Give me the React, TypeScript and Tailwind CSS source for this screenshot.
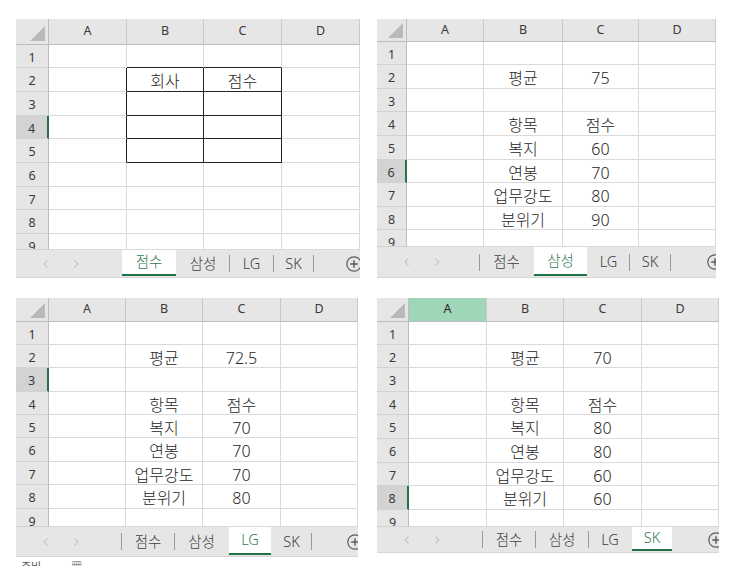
import React, { Fragment } from "react";

const TAB_NAMES = ["점수", "삼성", "LG", "SK"];
const COLS = ["A", "B", "C", "D"];

type SheetProps = {
  width: string;
  cols: string[];
  headerH: string;
  rows: string[];
  tabBarH: string;
  tabLeftW: string;
  tabWs: string[];
  plusW: string;
  active: number;
  selRow: number;
  selCol?: number;
  cells: Record<string, string>;
  table?: boolean;
  status?: boolean;
};

function inT(r: number, c: number) {
  return r >= 2 && r <= 5 && c >= 1 && c <= 2;
}

function Sheet(p: SheetProps) {
  return (
    <div className={`flex flex-col overflow-hidden shrink-0 ${p.width}`}>
      {/* header */}
      <div className={`flex ${p.headerH}`}>
        <div
          className={`${p.cols[0]} shrink-0 bg-[#e6e6e6] border-r border-r-[#bdbdbd] border-b border-b-[#bdbdbd] flex items-end justify-end pr-[3px] pb-[3px]`}
        >
          <svg width="15" height="15" viewBox="0 0 15 15">
            <polygon points="15,0 15,15 0,15" fill="#b9b9b9" />
          </svg>
        </div>
        {COLS.map((c, i) => (
          <div
            key={c}
            className={`${p.cols[i + 1]} shrink-0 flex items-center justify-center text-[12.5px] border-r border-r-[#c9c9c9] border-b border-b-[#bdbdbd] ${
              p.selCol === i ? "bg-[#a0d6b8] text-[#262626]" : "bg-[#e6e6e6] text-[#3a3a3a]"
            }`}
          >
            {c}
          </div>
        ))}
      </div>
      {/* rows */}
      {p.rows.map((h, ri) => {
        const r = ri + 1;
        const sel = p.selRow === r;
        return (
          <div key={r} className={`flex ${h}`}>
            <div
              className={`${p.cols[0]} shrink-0 overflow-hidden border-b border-b-[#d2d2d2] ${
                sel
                  ? "bg-[#d3d3d3] border-r-2 border-r-[#217346] text-[#3a3a3a]"
                  : "bg-[#e6e6e6] border-r border-r-[#bdbdbd] text-[#3a3a3a]"
              }`}
            >
              <div className="h-[23px] flex items-center justify-center pt-[4px] text-[12.5px]">{r}</div>
            </div>
            {COLS.map((c, ci) => {
              const rb = p.table && (inT(r, ci) || inT(r, ci + 1)) ? "border-r-[#222]" : "border-r-[#dadada]";
              const bb = p.table && (inT(r, ci) || inT(r + 1, ci)) ? "border-b-[#222]" : "border-b-[#dadada]";
              const v = p.cells[`${c}${r}`];
              return (
                <div
                  key={c}
                  className={`${p.cols[ci + 1]} shrink-0 overflow-hidden bg-white border-r border-b ${rb} ${bb}`}
                >
                  <div className="h-[23px] flex items-center justify-center pt-[2px] text-[16px] font-light text-[#262626]">
                    {v ?? ""}
                  </div>
                </div>
              );
            })}
          </div>
        );
      })}
      {/* tab bar */}
      <div className={`flex items-stretch bg-[#e6e6e6] border-b border-b-[#d6d6d6] ${p.tabBarH}`}>
        <div className={`${p.tabLeftW} shrink-0 flex items-center`}>
          <svg className="ml-[27px]" width="5" height="8" viewBox="0 0 5 8">
            <path d="M4.5 0.5 L1 4 L4.5 7.5" fill="none" stroke="#c6c6c6" strokeWidth="1.1" />
          </svg>
          <svg className="ml-[26px]" width="5" height="8" viewBox="0 0 5 8">
            <path d="M0.5 0.5 L4 4 L0.5 7.5" fill="none" stroke="#c6c6c6" strokeWidth="1.1" />
          </svg>
        </div>
        {TAB_NAMES.map((t, i) => {
          const showSep = i !== p.active && i - 1 !== p.active;
          const isActive = i === p.active;
          return (
            <Fragment key={t}>
              <div className={`w-px h-[17px] self-center shrink-0 ${showSep ? "bg-[#9a9a9a]" : ""}`} />
              {isActive ? (
                <div className={`${p.tabWs[i]} shrink-0 flex flex-col bg-white mb-[1px]`}>
                  <div className="flex-1 flex items-center justify-center text-[14.5px] font-light text-[#2f7a52]">{t}</div>
                  <div className="h-[2px] bg-[#217346]" />
                </div>
              ) : (
                <div className={`${p.tabWs[i]} shrink-0 flex items-center justify-center text-[14.5px] font-light text-[#404040]`}>
                  {t}
                </div>
              )}
            </Fragment>
          );
        })}
        <div className={`w-px h-[17px] self-center shrink-0 ${p.active !== 3 ? "bg-[#9a9a9a]" : ""}`} />
        <div className="flex-1" />
        <div className={`${p.plusW} shrink-0 self-center h-[16px] overflow-visible`}>
          <svg width="16" height="16" viewBox="0 0 16 16">
            <circle cx="8" cy="8" r="7.2" fill="none" stroke="#5a5a5a" strokeWidth="1.2" />
            <path d="M8 4.2 V11.8 M4.2 8 H11.8" stroke="#5a5a5a" strokeWidth="1.4" />
          </svg>
        </div>
      </div>
      {p.status && (
        <div className="h-[9px] overflow-hidden flex items-start pl-[5px] gap-[30px] text-[11px] text-[#555] leading-[14px] pt-[3px]">
          <span>준비</span>
          <span>▦</span>
        </div>
      )}
    </div>
  );
}

const rowsA = ["h-[23px]", "h-[24px]", "h-[24px]", "h-[23px]", "h-[24px]", "h-[24px]", "h-[23px]", "h-[24px]", "h-[16px]"];
const rowsB = ["h-[23px]", "h-[24px]", "h-[23px]", "h-[24px]", "h-[24px]", "h-[23px]", "h-[24px]", "h-[23px]", "h-[17px]"];
const rowsC = ["h-[23px]", "h-[23px]", "h-[24px]", "h-[23px]", "h-[23px]", "h-[24px]", "h-[23px]", "h-[24px]", "h-[18px]"];
const rowsD = ["h-[23px]", "h-[23px]", "h-[24px]", "h-[23px]", "h-[24px]", "h-[24px]", "h-[23px]", "h-[24px]", "h-[17px]"];

function scores(avg: string, a: string, b: string, c: string, d: string): Record<string, string> {
  return {
    B2: "평균",
    C2: avg,
    B4: "항목",
    C4: "점수",
    B5: "복지",
    C5: a,
    B6: "연봉",
    C6: b,
    B7: "업무강도",
    C7: c,
    B8: "분위기",
    C8: d,
  };
}

export default function App() {
  return (
    <div className="w-[740px] h-[575px] bg-white overflow-hidden flex flex-col font-['Noto_Sans','Noto_Sans_CJK_KR',sans-serif]">
      <div className="flex pl-[16px] pt-[19px] gap-[17px]">
        <Sheet
          width="w-[344px]"
          cols={["w-[33px]", "w-[78px]", "w-[77px]", "w-[78px]", "w-[78px]"]}
          headerH="h-[26px]"
          rows={rowsA}
          tabBarH="h-[28px]"
          tabLeftW="w-[105px]"
          tabWs={["w-[54px]", "w-[52px]", "w-[43px]", "w-[39px]"]}
          plusW="w-[14px]"
          active={0}
          selRow={4}
          cells={{ B2: "회사", C2: "점수" }}
          table
        />
        <Sheet
          width="w-[339px]"
          cols={["w-[30px]", "w-[77px]", "w-[79px]", "w-[76px]", "w-[77px]"]}
          headerH="h-[23px]"
          rows={rowsB}
          tabBarH="h-[31px]"
          tabLeftW="w-[102px]"
          tabWs={["w-[53px]", "w-[53px]", "w-[41px]", "w-[40px]"]}
          plusW="w-[9px]"
          active={1}
          selRow={6}
          cells={scores("75", "60", "70", "80", "90")}
        />
      </div>
      <div className="flex pl-[16px] pt-[20px] gap-[19px]">
        <Sheet
          width="w-[342px]"
          cols={["w-[33px]", "w-[77px]", "w-[77px]", "w-[78px]", "w-[77px]"]}
          headerH="h-[24px]"
          rows={rowsC}
          tabBarH="h-[30px]"
          tabLeftW="w-[105px]"
          tabWs={["w-[52px]", "w-[53px]", "w-[42px]", "w-[39px]"]}
          plusW="w-[11px]"
          active={2}
          selRow={3}
          cells={scores("72.5", "70", "70", "70", "80")}
          status
        />
        <Sheet
          width="w-[342px]"
          cols={["w-[32px]", "w-[78px]", "w-[77px]", "w-[78px]", "w-[77px]"]}
          headerH="h-[24px]"
          rows={rowsD}
          tabBarH="h-[26px]"
          tabLeftW="w-[105px]"
          tabWs={["w-[52px]", "w-[52px]", "w-[42px]", "w-[40px]"]}
          plusW="w-[11px]"
          active={3}
          selRow={8}
          selCol={0}
          cells={scores("70", "80", "80", "60", "60")}
        />
      </div>
    </div>
  );
}
